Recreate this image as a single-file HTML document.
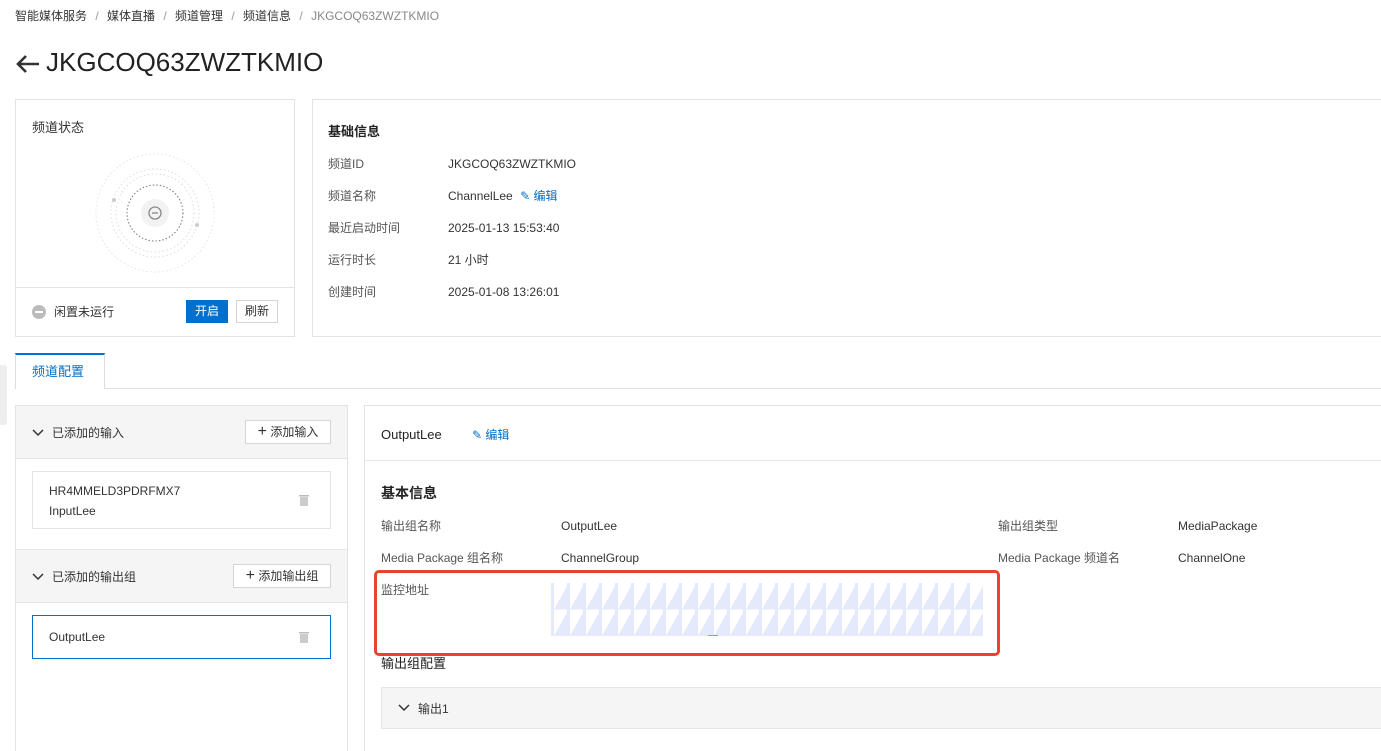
<!DOCTYPE html>
<html><head><meta charset="utf-8"><style>
*{margin:0;padding:0;box-sizing:border-box}
html,body{width:1381px;height:751px;overflow:hidden}
body{background:#fff;font-family:"Liberation Sans","Noto Sans CJK SC",sans-serif;font-size:12px;line-height:17px;color:#333;position:relative}
.a{position:absolute;white-space:nowrap}
.box{position:absolute;border:1px solid #e3e3e3;background:#fff}
.lbl{color:#555}
.blue{color:#0070cc}
.btn{position:absolute;border:1px solid #d5d5d5;background:#fff;text-align:center;color:#333}
</style></head><body>
<div class="a" style="left:15px;top:8px;color:#333">智能媒体服务 <span style="color:#999;margin:0 5px">/</span> 媒体直播 <span style="color:#999;margin:0 5px">/</span> 频道管理 <span style="color:#999;margin:0 5px">/</span> 频道信息 <span style="color:#999;margin:0 5px">/</span> <span style="color:#888">JKGCOQ63ZWZTKMIO</span></div>
<svg class="a" style="left:15px;top:53px" width="26" height="22" viewBox="0 0 26 22"><path d="M24 11H3M11 3L3 11L11 19" stroke="#333" stroke-width="2.6" fill="none"/></svg>
<div class="a" style="left:46px;top:46px;font-size:26px;line-height:32px;color:#222">JKGCOQ63ZWZTKMIO</div>

<div class="box" style="left:15px;top:99px;width:280px;height:238px"></div>
<div class="a" style="left:32px;top:119px;font-size:13px">频道状态</div>
<svg class="a" style="left:90px;top:150px" width="130" height="130" viewBox="0 0 130 130">
<circle cx="65" cy="63" r="59" fill="none" stroke="#e4e4e4" stroke-dasharray="1.5 2.5"/>
<circle cx="65" cy="63" r="44" fill="none" stroke="#ddd" stroke-dasharray="1.5 2.5"/>
<circle cx="65" cy="63" r="39" fill="none" stroke="#ddd" stroke-dasharray="1.5 2.5"/>
<circle cx="65" cy="63" r="28" fill="none" stroke="#777" stroke-dasharray="1.5 2"/>
<circle cx="65" cy="63" r="14" fill="#f2f2f2"/>
<circle cx="65" cy="63" r="6" fill="none" stroke="#888" stroke-width="1.3"/>
<path d="M62 63h6" stroke="#888" stroke-width="1.3"/>
<circle cx="24" cy="50" r="2" fill="#ccc"/><circle cx="107" cy="75" r="2" fill="#ccc"/>
</svg>
<div class="a" style="left:16px;top:287px;width:278px;border-top:1px solid #e3e3e3"></div>
<svg class="a" style="left:32px;top:305px" width="14" height="14"><circle cx="7" cy="7" r="7" fill="#bbb"/><rect x="3" y="6" width="8" height="2" fill="#fff"/></svg>
<div class="a" style="left:54px;top:304px">闲置未运行</div>
<div class="a" style="left:186px;top:300px;width:42px;height:23px;background:#0070cc;color:#fff;text-align:center;line-height:23px">开启</div>
<div class="btn" style="left:236px;top:300px;width:42px;height:23px;line-height:21px">刷新</div>

<div class="box" style="left:312px;top:99px;width:1080px;height:238px"></div>
<div class="a" style="left:328px;top:123px;font-size:13px;font-weight:bold;color:#222">基础信息</div>
<div class="a lbl" style="left:328px;top:156px">频道ID</div><div class="a" style="left:448px;top:156px">JKGCOQ63ZWZTKMIO</div>
<div class="a lbl" style="left:328px;top:188px">频道名称</div><div class="a" style="left:448px;top:188px">ChannelLee <span class="blue" style="margin-left:4px">✎ 编辑</span></div>
<div class="a lbl" style="left:328px;top:220px">最近启动时间</div><div class="a" style="left:448px;top:220px">2025-01-13 15:53:40</div>
<div class="a lbl" style="left:328px;top:252px">运行时长</div><div class="a" style="left:448px;top:252px">21 小时</div>
<div class="a lbl" style="left:328px;top:284px">创建时间</div><div class="a" style="left:448px;top:284px">2025-01-08 13:26:01</div>

<div class="a" style="left:0;top:365px;width:7px;height:60px;background:#eee;border-radius:0 3px 3px 0"></div>
<div class="a" style="left:16px;top:388px;width:1365px;border-top:1px solid #ddd"></div>
<div class="a" style="left:15px;top:353px;width:90px;height:36px;border:1px solid #ddd;border-top:2px solid #0070cc;border-bottom:none;background:#fff"></div>
<div class="a blue" style="left:32px;top:363px;font-size:13px">频道配置</div>

<div class="box" style="left:15px;top:405px;width:333px;height:360px"></div>
<div class="a" style="left:16px;top:406px;width:331px;height:53px;background:#f5f5f5;border-bottom:1px solid #e3e3e3"></div>
<svg class="a" style="left:32px;top:429px" width="12" height="8"><path d="M1 1l5 5 5-5" stroke="#333" stroke-width="1.5" fill="none"/></svg>
<div class="a" style="left:52px;top:425px">已添加的输入</div>
<div class="btn" style="left:245px;top:420px;width:86px;height:24px;line-height:22px"><span style="font-size:16px">+</span> 添加输入</div>
<div class="box" style="left:32px;top:471px;width:299px;height:58px"></div>
<div class="a" style="left:49px;top:483px">HR4MMELD3PDRFMX7</div>
<div class="a" style="left:49px;top:503px">InputLee</div>
<svg class="a" style="left:298px;top:493px" width="12" height="14"><rect x="1" y="2" width="10" height="1.5" fill="#bbb"/><rect x="2" y="4" width="8" height="9" fill="#ccc"/></svg>
<div class="a" style="left:16px;top:549px;width:331px;height:54px;background:#f5f5f5;border-top:1px solid #e8e8e8;border-bottom:1px solid #e3e3e3"></div>
<svg class="a" style="left:32px;top:573px" width="12" height="8"><path d="M1 1l5 5 5-5" stroke="#333" stroke-width="1.5" fill="none"/></svg>
<div class="a" style="left:52px;top:569px">已添加的输出组</div>
<div class="btn" style="left:233px;top:564px;width:98px;height:24px;line-height:22px"><span style="font-size:16px">+</span> 添加输出组</div>
<div class="a" style="left:32px;top:615px;width:299px;height:44px;border:1px solid #0070cc;background:#fff"></div>
<div class="a" style="left:49px;top:629px">OutputLee</div>
<svg class="a" style="left:298px;top:630px" width="12" height="14"><rect x="1" y="2" width="10" height="1.5" fill="#bbb"/><rect x="2" y="4" width="8" height="9" fill="#ccc"/></svg>

<div class="box" style="left:364px;top:405px;width:1030px;height:360px"></div>
<div class="a" style="left:381px;top:426px;font-size:13px;color:#222">OutputLee</div>
<div class="a blue" style="left:472px;top:427px">✎ 编辑</div>
<div class="a" style="left:365px;top:460px;width:1016px;border-top:1px solid #e8e8e8"></div>
<div class="a" style="left:381px;top:485px;font-size:14px;font-weight:bold;color:#222">基本信息</div>
<div class="a lbl" style="left:381px;top:518px">输出组名称</div><div class="a" style="left:561px;top:518px">OutputLee</div>
<div class="a lbl" style="left:998px;top:518px">输出组类型</div><div class="a" style="left:1178px;top:518px">MediaPackage</div>
<div class="a lbl" style="left:381px;top:550px">Media Package 组名称</div><div class="a" style="left:561px;top:550px">ChannelGroup</div>
<div class="a lbl" style="left:998px;top:550px">Media Package 频道名</div><div class="a" style="left:1178px;top:550px">ChannelOne</div>
<div class="a" style="left:374px;top:570px;width:626px;height:86px;border:3px solid #e8432e;border-radius:5px"></div>
<div class="a lbl" style="left:381px;top:582px">监控地址</div>
<svg class="a" style="left:551px;top:583px" width="432" height="53"><defs><pattern id="p" width="16" height="26.5" patternUnits="userSpaceOnUse"><rect x="0" y="0" width="3" height="26.5" fill="#e4e9fb"/><polygon points="3,26.5 16,3 16,26.5" fill="#e4e9fb"/></pattern></defs><rect width="432" height="53" fill="url(#p)"/></svg>
<div class="a" style="left:708px;top:635px;width:10px;height:1px;background:#8c9ae0"></div>
<div class="a" style="left:381px;top:655px;font-size:13px;color:#222">输出组配置</div>
<div class="a" style="left:381px;top:687px;width:1010px;height:42px;background:#f5f5f5;border:1px solid #e6e6e6"></div>
<svg class="a" style="left:398px;top:704px" width="12" height="8"><path d="M1 1l5 5 5-5" stroke="#333" stroke-width="1.5" fill="none"/></svg>
<div class="a" style="left:418px;top:701px">输出1</div>
</body></html>
